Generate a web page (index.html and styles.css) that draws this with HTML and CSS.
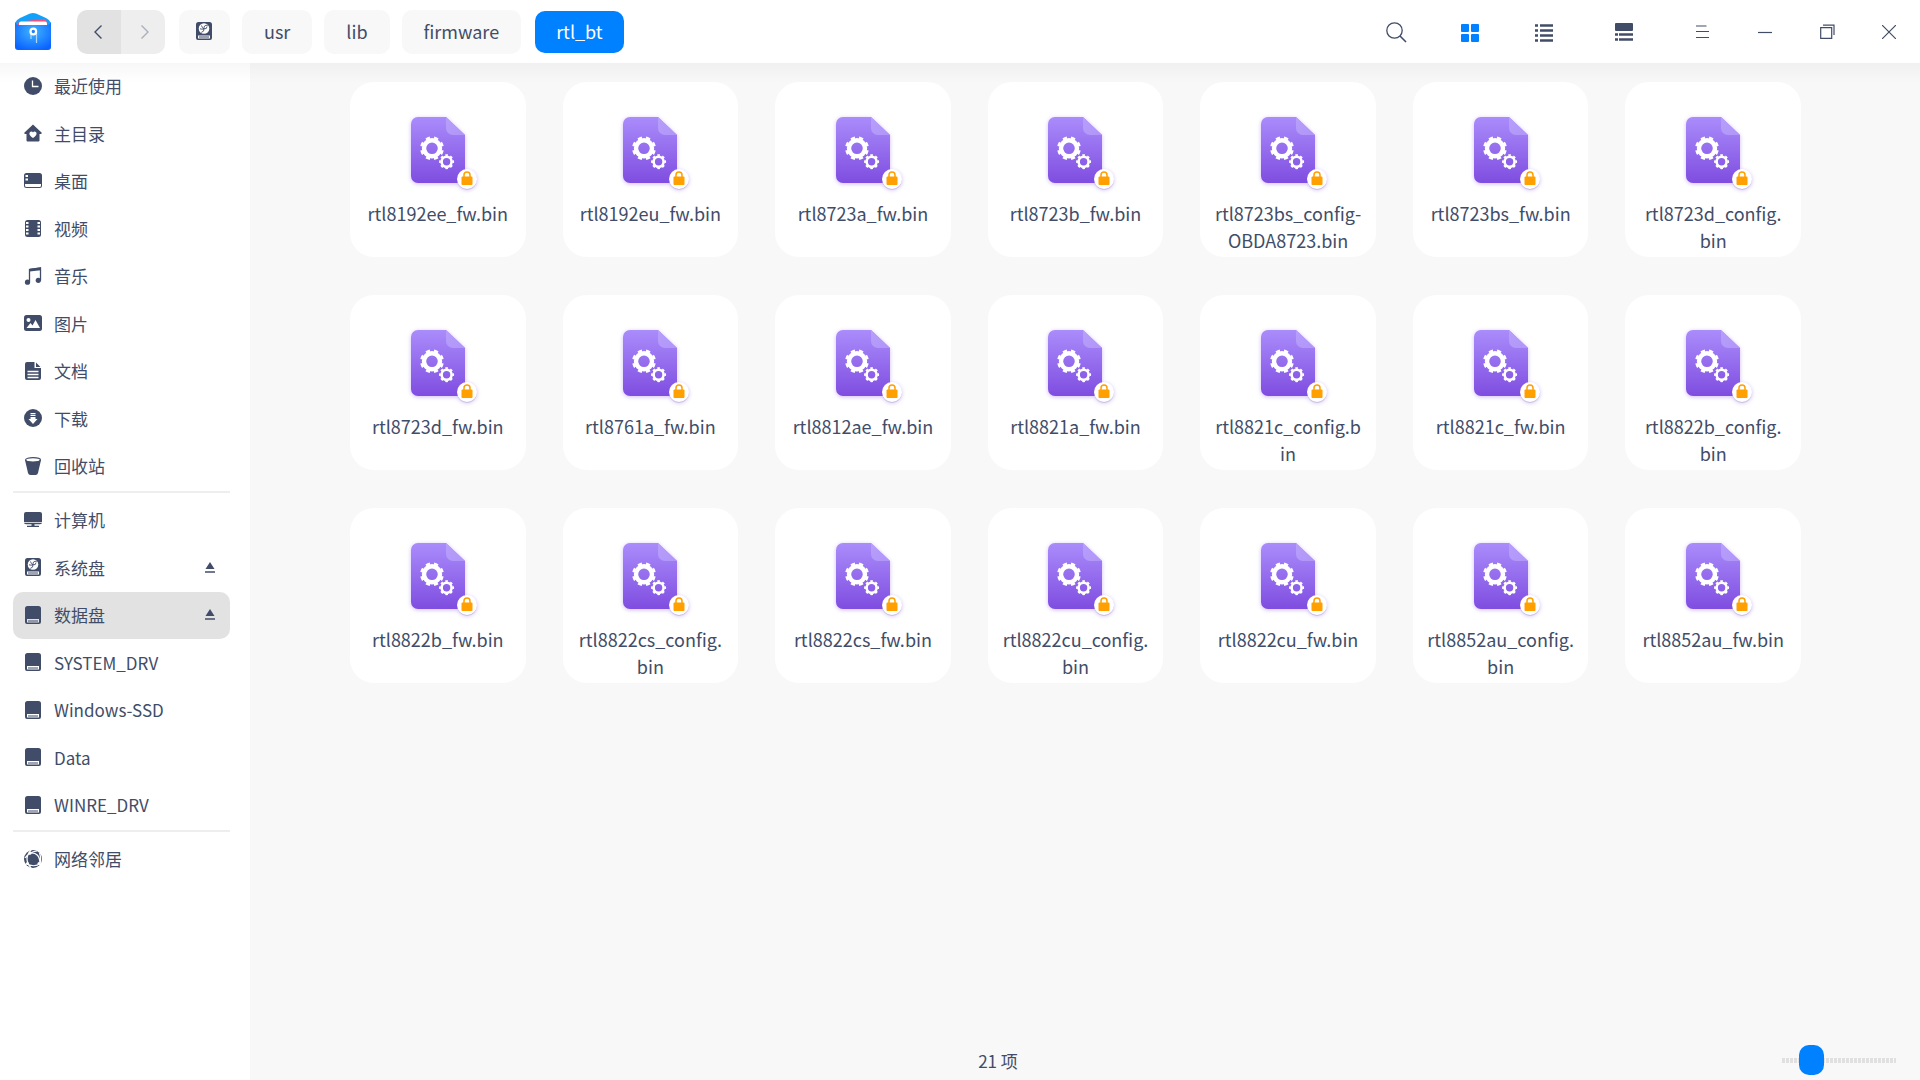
FILE: index.html
```html
<!DOCTYPE html>
<html lang="zh-CN">

<head>
    <meta charset="UTF-8">
    <meta name="viewport" content="width=device-width, initial-scale=1.0">
    <title>rtl_bt</title>
    <link rel="stylesheet" href="styles.css">
</head>

<body>
    <!-- Shared icons -->
    <svg class="sprite" aria-hidden="true">
        <defs>
            <linearGradient id="paper" x1="0" y1="0" x2="0" y2="1">
                <stop offset="0" stop-color="#aa8cfb" />
                <stop offset="1" stop-color="#7f4de0" />
            </linearGradient>
            <linearGradient id="fold" x1="0" y1="0" x2="1" y2="1">
                <stop offset="0" stop-color="#b79ffb" />
                <stop offset="1" stop-color="#b095f8" />
            </linearGradient>
            <radialGradient id="wallet" cx=".5" cy=".35" r=".7">
                <stop offset="0" stop-color="#3fb4ff" />
                <stop offset="1" stop-color="#0a62ff" />
            </radialGradient>
        </defs>
        <symbol id="bin" viewBox="0 0 80 80">
            <path d="M20 7h28l19 18v41a7 7 0 0 1-7 7H20a7 7 0 0 1-7-7V14a7 7 0 0 1 7-7z" fill="url(#paper)" />
            <path d="M48 7l19 18H55a7 7 0 0 1-7-7z" fill="url(#fold)" />
            <g fill="none" stroke="#fff">
                <circle cx="34" cy="38.300" r="8" stroke-width="4.400" />
                <circle cx="34" cy="38.300" r="10.700" stroke-width="2.400" pathLength="80" stroke-dasharray="5 5" stroke-dashoffset="7.500" />
                <circle cx="48.600" cy="51.700" r="5" stroke-width="2.600" />
                <circle cx="48.600" cy="51.700" r="6.600" stroke-width="1.800" pathLength="80" stroke-dasharray="5 5" stroke-dashoffset="2.500" />
            </g>
            <circle cx="69" cy="70" r="10" fill="#000" opacity=".12" />
            <circle cx="69" cy="69" r="10" fill="#fff" />
            <path d="M66 67v-2a3 3 0 0 1 6 0v2" fill="none" stroke="#ff9f00" stroke-width="1.500" />
            <rect x="63.500" y="66.500" width="11" height="8.500" rx="1" fill="#ff9f00" />
        </symbol>
        <symbol id="drive" viewBox="0 0 18 18">
            <path d="M3.500 0h11A2.500 2.500 0 0 1 17 2.500V16a2 2 0 0 1-2 2H3a2 2 0 0 1-2-2V2.500A2.500 2.500 0 0 1 3.500 0zM3 13v3.500h12V13z" fill="currentColor" fill-rule="evenodd" />
            <path d="M4 15h10" stroke="currentColor" />
        </symbol>
        <symbol id="system" viewBox="0 0 18 18">
            <path d="M3.500 0h11A2.500 2.500 0 0 1 17 2.500V16a2 2 0 0 1-2 2H3a2 2 0 0 1-2-2V2.500A2.500 2.500 0 0 1 3.500 0zM3 13.500v3h12v-3z" fill="currentColor" fill-rule="evenodd" />
            <path d="M4 15h10" stroke="currentColor" />
            <circle cx="9" cy="6.500" r="5.300" fill="#fff" />
            <path d="M12.800 3.300Q8.500 2.800 9 6.800Q7 6 6.500 3.500M9 6.800q-2 .8-4 0M9 6.800q3 .5 3-2.200M9 6.800q.4 2.800-2.700 3.600" fill="none" stroke="currentColor" stroke-width=".9" />
        </symbol>
        <symbol id="eject" viewBox="0 0 10 11">
            <path d="M5 0l4.500 7h-9zM0 9.300h10v1.400H0z" fill="currentColor" />
        </symbol>
    </svg>

    <!-- Title bar -->
    <header class="titlebar">
        <svg class="logo" viewBox="0 0 36 37">
            <path d="M0 10Q1 7 5 5L15 .6q3-1.200 6 0L31 5q4 2 5 5v12H0z" fill="#12a0fb" />
            <path d="M2 11q1-2 4-2.500l22-2.500q3 0 4 3l-1 3H3z" fill="#ff4d74" />
            <rect x="4" y="8.500" width="28" height="8" rx="2" fill="#fff" />
            <path d="M0 9q1 3 4 3h28q3 0 4-3v25q0 3-3 3H3q-3 0-3-3z" fill="url(#wallet)" />
            <path d="M16 20v6M21.500 20v10" stroke="#a9d9ff" stroke-width="1.200" />
            <circle cx="18.300" cy="18.500" r="2.800" fill="#1d83ff" stroke="#fff" stroke-width="2.200" />
        </svg>
        <div class="history">
            <button class="back" aria-label="后退"><svg viewBox="0 0 8 14"><path d="M7.500 .5L1 7l6.500 6.500" fill="none" stroke="currentColor" stroke-width="1.400" /></svg></button>
            <button class="forward" aria-label="前进" disabled><svg viewBox="0 0 8 14"><path d="M.5 .5L7 7 .5 13.500" fill="none" stroke="currentColor" stroke-width="1.400" /></svg></button>
        </div>
        <nav class="crumbs">
            <button class="crumb root" aria-label="系统盘"><svg class="icon"><use href="#system" /></svg></button>
            <button class="crumb">usr</button>
            <button class="crumb">lib</button>
            <button class="crumb">firmware</button>
            <button class="crumb current">rtl_bt</button>
        </nav>
        <div class="tools">
            <button aria-label="搜索"><svg width="22" height="22" viewBox="0 0 22 22"><g fill="none" stroke="currentColor" stroke-width="1.300"><circle cx="9.500" cy="9.500" r="7.700" /><path d="M15 15l6 6" stroke-width="1.600" /></g></svg></button>
            <button class="on" aria-label="图标视图"><svg class="icon low" viewBox="0 0 18 18"><g fill="currentColor"><rect width="8" height="8" rx="1" /><rect x="10" width="8" height="8" rx="1" /><rect y="10" width="8" height="8" rx="1" /><rect x="10" y="10" width="8" height="8" rx="1" /></g></svg></button>
            <button aria-label="列表视图"><svg class="icon low" viewBox="0 0 18 18"><path d="M0 1.500h3M5 1.500h13M0 6.500h3M5 6.500h13M0 11.500h3M5 11.500h13M0 16.500h3M5 16.500h13" stroke="currentColor" stroke-width="2.600" /></svg></button>
        </div>
        <div class="tools detail">
            <button aria-label="详细信息"><svg class="icon" viewBox="0 0 18 18"><rect width="18" height="8" rx="1" fill="currentColor" /><path d="M0 11.500h3M4 11.500h14M0 16.500h3M4 16.500h14" stroke="currentColor" stroke-width="2.600" /></svg></button>
        </div>
        <div class="window-buttons">
            <button aria-label="菜单"><svg width="15" height="14" viewBox="0 0 15 14"><path d="M0 1h10.500M0 6.500h13M0 12.500h13" stroke="currentColor" stroke-width="1.200" /></svg></button>
            <button aria-label="最小化"><svg width="14" height="14" viewBox="0 0 14 14"><path d="M0 7.500h14" stroke="currentColor" stroke-width="1.200" /></svg></button>
            <button aria-label="还原"><svg width="15" height="15" viewBox="0 0 15 15"><path d="M.7 3.700h11v10.600H.7zM3 1.200h11V11" fill="none" stroke="currentColor" stroke-width="1.200" /></svg></button>
            <button aria-label="关闭"><svg width="14" height="14" viewBox="0 0 14 14"><path d="M0 0l14 14M14 0L0 14" stroke="currentColor" stroke-width="1.200" /></svg></button>
        </div>
    </header>

    <div class="content">
        <!-- Places -->
        <nav class="sidebar">
            <ul>
                <li><a href="#"><svg class="icon" viewBox="0 0 18 18"><circle cx="9" cy="9" r="9" fill="currentColor" /><path d="M8.500 3.500v6h6" fill="none" stroke="#fff" stroke-width="1.300" /></svg>最近使用</a></li>
                <li><a href="#"><svg class="icon" viewBox="0 0 18 18"><path d="M9 .5l9 8.500-1 1h-1.500v6.500a1 1 0 0 1-1 1h-11a1 1 0 0 1-1-1V10H1L0 9z" fill="currentColor" /><path d="M9 14C3.500 10.500 5.500 7.500 7.500 7.500q1 0 1.500 1 .5-1 1.500-1c2 0 4 3-1.500 6.500z" fill="#fff" /></svg>主目录</a></li>
                <li><a href="#"><svg class="icon" viewBox="0 0 18 18"><path d="M2.500 1h13A2.500 2.500 0 0 1 18 3.500v10a2.500 2.500 0 0 1-2.500 2.500h-13A2.500 2.500 0 0 1 0 13.500v-10A2.500 2.500 0 0 1 2.500 1z" fill="currentColor" /><path d="M1 12h16v1.500q0 1.500-1.500 1.500h-13Q1 15 1 13.500zM1.500 3H4v2H1.500zM1.500 6.500H4v2H1.500z" fill="#fff" /></svg>桌面</a></li>
                <li><a href="#"><svg class="icon" viewBox="0 0 18 18"><rect x="1" y="1" width="16" height="17" rx="2.500" fill="currentColor" /><path d="M2 3h2.500v2H2zM2 6.500h2.500v2H2zM2 10h2.500v2H2zM2 13.500h2.500v2H2zM13.500 3H16v2h-2.500zM13.500 6.500H16v2h-2.500zM13.500 10H16v2h-2.500zM13.500 13.500H16v2h-2.500z" fill="#fff" /></svg>视频</a></li>
                <li><a href="#"><svg class="icon" viewBox="0 0 18 18"><path d="M5.500 15V2.500L16.500 1v12.500" fill="none" stroke="currentColor" stroke-width="1.300" /><path d="M5.500 1.700L17 .3v3L5.500 4.500z" fill="currentColor" /><circle cx="3.500" cy="15.200" r="2.600" fill="currentColor" /><circle cx="14.300" cy="13.300" r="2.600" fill="currentColor" /></svg>音乐</a></li>
                <li><a href="#"><svg class="icon" viewBox="0 0 18 18"><rect y="1" width="18" height="16" rx="2.500" fill="currentColor" /><circle cx="4.500" cy="6" r="2" fill="#fff" /><path d="M2.500 14l4-5 2 2.500L11.500 6l4.500 8z" fill="#fff" /></svg>图片</a></li>
                <li><a href="#"><svg class="icon" viewBox="0 0 18 18"><path d="M3 0h7.500v6H17v10a2 2 0 0 1-2 2H3a2 2 0 0 1-2-2V2a2 2 0 0 1 2-2zM12 .5L16.500 5H12z" fill="currentColor" /><path d="M3.500 9.500h11M3.500 12.500h11M3.500 15.500h11" stroke="#fff" stroke-width="1.300" /></svg>文档</a></li>
                <li><a href="#"><svg class="icon" viewBox="0 0 18 18"><circle cx="9" cy="9" r="9" fill="currentColor" /><path d="M6.500 4h5v1.200h-5zM6.500 6h5v1h-5zM6.500 8h5v2h2L9 15l-4.500-5h2z" fill="#fff" /></svg>下载</a></li>
                <li><a href="#"><svg class="icon" viewBox="0 0 18 18"><path d="M1 3l3 13q.5 2 2.500 2h5q2 0 2.500-2l3-13z" fill="currentColor" /><ellipse cx="9" cy="2.800" rx="7.400" ry="2.200" fill="#fff" stroke="currentColor" stroke-width="1.200" /></svg>回收站</a></li>
            </ul>
            <hr>
            <ul>
                <li><a href="#"><svg class="icon" viewBox="0 0 18 18"><path d="M2 1h14a2 2 0 0 1 2 2v8H0V3a2 2 0 0 1 2-2zM0 11.800h18q0 1.400-2 1.400H2q-2 0-2-1.400zM7.500 13h3v1.700H15V16H3v-1.300h4.500z" fill="currentColor" /></svg>计算机</a></li>
                <li><a href="#"><svg class="icon"><use href="#system" /></svg>系统盘<svg class="eject"><use href="#eject" /></svg></a></li>
                <li class="selected"><a href="#"><svg class="icon"><use href="#drive" /></svg>数据盘<svg class="eject"><use href="#eject" /></svg></a></li>
                <li><a href="#"><svg class="icon"><use href="#drive" /></svg>SYSTEM_DRV</a></li>
                <li><a href="#"><svg class="icon"><use href="#drive" /></svg>Windows-SSD</a></li>
                <li><a href="#"><svg class="icon"><use href="#drive" /></svg>Data</a></li>
                <li><a href="#"><svg class="icon"><use href="#drive" /></svg>WINRE_DRV</a></li>
            </ul>
            <hr>
            <ul>
                <li><a href="#"><svg class="icon" viewBox="0 0 18 18"><circle cx="9" cy="9" r="9" fill="currentColor" /><g fill="none" stroke="#fff" stroke-width="1.200"><path d="M7 0Q-1 9 7 18M6 3q10-1 10 11M2 13.500q8 4.500 14.500 0M1 8q4-6 12-7M15.500 3q2 5 .5 11" /></g><circle cx="6" cy="3.200" r="1.500" fill="#fff" /><circle cx="3.500" cy="13.500" r="1.500" fill="#fff" /><circle cx="15" cy="13.500" r="1.500" fill="#fff" /></svg>网络邻居</a></li>
            </ul>
        </nav>

        <!-- Files -->
        <main>
            <div class="files">
                <button class="file"><svg><use href="#bin" /></svg><span>rtl8192ee_fw.bin</span></button>
                <button class="file"><svg><use href="#bin" /></svg><span>rtl8192eu_fw.bin</span></button>
                <button class="file"><svg><use href="#bin" /></svg><span>rtl8723a_fw.bin</span></button>
                <button class="file"><svg><use href="#bin" /></svg><span>rtl8723b_fw.bin</span></button>
                <button class="file"><svg><use href="#bin" /></svg><span>rtl8723bs_config-<br>OBDA8723.bin</span></button>
                <button class="file"><svg><use href="#bin" /></svg><span>rtl8723bs_fw.bin</span></button>
                <button class="file"><svg><use href="#bin" /></svg><span>rtl8723d_config.<br>bin</span></button>
                <button class="file"><svg><use href="#bin" /></svg><span>rtl8723d_fw.bin</span></button>
                <button class="file"><svg><use href="#bin" /></svg><span>rtl8761a_fw.bin</span></button>
                <button class="file"><svg><use href="#bin" /></svg><span>rtl8812ae_fw.bin</span></button>
                <button class="file"><svg><use href="#bin" /></svg><span>rtl8821a_fw.bin</span></button>
                <button class="file"><svg><use href="#bin" /></svg><span>rtl8821c_config.b<br>in</span></button>
                <button class="file"><svg><use href="#bin" /></svg><span>rtl8821c_fw.bin</span></button>
                <button class="file"><svg><use href="#bin" /></svg><span>rtl8822b_config.<br>bin</span></button>
                <button class="file"><svg><use href="#bin" /></svg><span>rtl8822b_fw.bin</span></button>
                <button class="file"><svg><use href="#bin" /></svg><span>rtl8822cs_config.<br>bin</span></button>
                <button class="file"><svg><use href="#bin" /></svg><span>rtl8822cs_fw.bin</span></button>
                <button class="file"><svg><use href="#bin" /></svg><span>rtl8822cu_config.<br>bin</span></button>
                <button class="file"><svg><use href="#bin" /></svg><span>rtl8822cu_fw.bin</span></button>
                <button class="file"><svg><use href="#bin" /></svg><span>rtl8852au_config.<br>bin</span></button>
                <button class="file"><svg><use href="#bin" /></svg><span>rtl8852au_fw.bin</span></button>
            </div>
            <footer class="statusbar">
                <span class="count">21 项</span>
                <input type="range" min="0" max="100" value="19" aria-label="图标大小">
            </footer>
        </main>
    </div>
</body>

</html>
```
FILE: styles.css
```css
* {
    box-sizing: border-box;
}

body {
    font-family: "Noto Sans CJK SC", "Noto Sans", sans-serif;
    font-size: 17px;
    color: #414d68;
    background-color: #ffffff;
    margin: 0;
    display: flex;
    flex-direction: column;
    min-height: 100vh;
}

button {
    font: inherit;
    color: inherit;
    background: none;
    border: none;
    padding: 0;
    cursor: pointer;
}

svg {
    display: block;
    flex: none;
}

.sprite {
    position: absolute;
    width: 0;
    height: 0;
}

.icon {
    width: 18px;
    height: 18px;
}

/* Title bar */
.titlebar {
    display: flex;
    align-items: center;
    height: 63px;
    padding-left: 15px;
}

.logo {
    width: 36px;
    height: 37px;
}

.history {
    display: flex;
    margin-left: 26px;
    border-radius: 10px;
    overflow: hidden;
}

.history button {
    display: flex;
    align-items: center;
    justify-content: center;
    width: 44px;
    height: 44px;
    background-color: #e2e2e2;
}

.history .back {
    padding-right: 3px;
}

.history .forward {
    padding-left: 3px;
}

.history button:disabled {
    color: #a9afbc;
    background-color: #eeeeee;
}

.history svg {
    width: 8px;
    height: 14px;
}

.crumbs {
    display: flex;
    align-items: center;
    gap: 12px;
    margin-left: 14px;
}

.crumb {
    height: 44px;
    padding: 0 22px 2px;
    border-radius: 10px;
    background-color: #f8f8f8;
    font-size: 18px;
}

.crumb.root {
    padding: 0 17px 2px 16px;
}

.crumb.current {
    height: 42px;
    margin-left: 2px;
    padding: 0 21px 2px;
    color: #ffffff;
    background-color: #0081ff;
}

.tools {
    display: flex;
    margin-left: auto;
}

.tools.detail {
    margin: 0 11px 0 6px;
}

.tools button {
    display: flex;
    align-items: center;
    justify-content: center;
    width: 74px;
    height: 44px;
}

.tools .on {
    color: #0081ff;
}

.low {
    margin-top: 3px;
}

.window-buttons {
    display: flex;
}

.window-buttons button {
    display: flex;
    align-items: center;
    justify-content: center;
    width: 62px;
    height: 44px;
}

.content {
    display: flex;
    flex: 1;
}

/* Sidebar */
.sidebar {
    width: 250px;
    flex: none;
    padding: 0 20px 0 13px;
    background-image: linear-gradient(rgba(0, 0, 0, 0.03), transparent 20px);
}

.sidebar ul {
    list-style: none;
    margin: 0;
    padding: 0;
}

.sidebar li {
    height: 47px;
    border-radius: 10px;
}

.sidebar li:nth-child(even) {
    height: 48px;
}

.sidebar a {
    display: flex;
    align-items: center;
    gap: 12px;
    height: 100%;
    padding: 0 15px 2px 11px;
    color: inherit;
    text-decoration: none;
}

.sidebar hr {
    height: 2px;
    margin: 1px 0 4px;
    border: none;
    background-color: #eeeeee;
}

.sidebar .selected {
    background-color: #e2e2e2;
}

.eject {
    width: 10px;
    height: 11px;
    margin-left: auto;
}

/* Files */
main {
    display: flex;
    flex: 1;
    flex-direction: column;
    background-color: #f8f8f8;
    background-image: linear-gradient(rgba(0, 0, 0, 0.03), transparent 20px);
}

.files {
    display: grid;
    grid-template-columns: repeat(7, 1fr);
    gap: 38px 37px;
    padding: 19px 119px 20px 100px;
}

.file {
    display: flex;
    flex-direction: column;
    align-items: center;
    gap: 10px;
    min-height: 175px;
    padding-top: 28px;
    border-radius: 24px;
    background-color: #ffffff;
    font-size: 18px;
    line-height: 27px;
}

.file svg {
    width: 80px;
    height: 80px;
    overflow: visible;
    filter: drop-shadow(0 1px 2px rgba(140, 90, 240, 0.4));
}

/* Status bar */
.statusbar {
    display: flex;
    align-items: center;
    height: 40px;
    margin-top: auto;
    padding-right: 24px;
}

.count {
    flex: 1;
    text-align: center;
}

.statusbar input {
    appearance: none;
    width: 114px;
    height: 30px;
    margin: 0 0 0 36px;
    background: repeating-linear-gradient(90deg, #e0e0e0 0 3px, transparent 3px 4px) center / 100% 5px no-repeat;
}

.statusbar input::-webkit-slider-thumb {
    appearance: none;
    width: 25px;
    height: 30px;
    border-radius: 10px;
    background-color: #0081ff;
}
```
